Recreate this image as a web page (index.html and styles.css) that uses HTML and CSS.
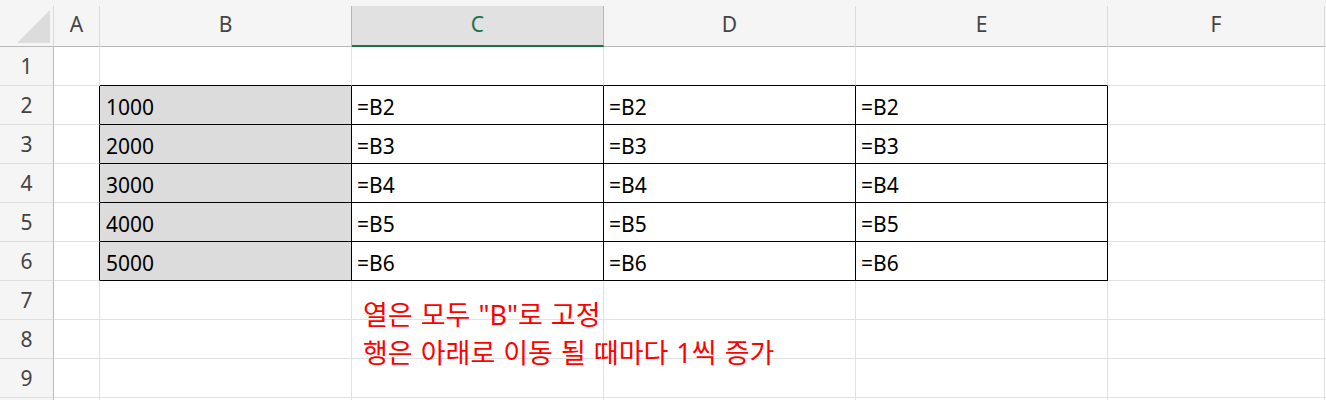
FILE: index.html
```html
<!DOCTYPE html>
<html lang="ko">
<head>
  <meta charset="UTF-8">
  <meta name="viewport" content="width=device-width, initial-scale=1.0">
  <title>Sheet1</title>
  <link rel="stylesheet" href="styles.css">
</head>
<body>

  <div class="sheet">
    <!-- Column headers -->
    <div class="corner"><div class="corner-mark"></div></div>
    <div class="col-head">A</div>
    <div class="col-head">B</div>
    <div class="col-head selected">C</div>
    <div class="col-head">D</div>
    <div class="col-head">E</div>
    <div class="col-head">F</div>
    <div class="col-head last"></div>

    <!-- Row 1 -->
    <div class="row-head">1</div>
    <div class="cell"></div>
    <div class="cell edge-b"></div>
    <div class="cell edge-b"></div>
    <div class="cell edge-b"></div>
    <div class="cell edge-b"></div>
    <div class="cell"></div>
    <div class="cell last"></div>

    <!-- Rows 2-6: bordered block -->
    <div class="row-head">2</div>
    <div class="cell edge-r"></div>
    <div class="cell box key">1000</div>
    <div class="cell box">=B2</div>
    <div class="cell box">=B2</div>
    <div class="cell box">=B2</div>
    <div class="cell"></div>
    <div class="cell last"></div>

    <div class="row-head">3</div>
    <div class="cell edge-r"></div>
    <div class="cell box key">2000</div>
    <div class="cell box">=B3</div>
    <div class="cell box">=B3</div>
    <div class="cell box">=B3</div>
    <div class="cell"></div>
    <div class="cell last"></div>

    <div class="row-head">4</div>
    <div class="cell edge-r"></div>
    <div class="cell box key">3000</div>
    <div class="cell box">=B4</div>
    <div class="cell box">=B4</div>
    <div class="cell box">=B4</div>
    <div class="cell"></div>
    <div class="cell last"></div>

    <div class="row-head">5</div>
    <div class="cell edge-r"></div>
    <div class="cell box key">4000</div>
    <div class="cell box">=B5</div>
    <div class="cell box">=B5</div>
    <div class="cell box">=B5</div>
    <div class="cell"></div>
    <div class="cell last"></div>

    <div class="row-head">6</div>
    <div class="cell edge-r"></div>
    <div class="cell box key">5000</div>
    <div class="cell box">=B6</div>
    <div class="cell box">=B6</div>
    <div class="cell box">=B6</div>
    <div class="cell"></div>
    <div class="cell last"></div>

    <!-- Rows 7-9 -->
    <div class="row-head">7</div>
    <div class="cell"></div>
    <div class="cell"></div>
    <div class="cell"></div>
    <div class="cell"></div>
    <div class="cell"></div>
    <div class="cell"></div>
    <div class="cell last"></div>

    <div class="row-head">8</div>
    <div class="cell"></div>
    <div class="cell"></div>
    <div class="cell"></div>
    <div class="cell"></div>
    <div class="cell"></div>
    <div class="cell"></div>
    <div class="cell last"></div>

    <div class="row-head">9</div>
    <div class="cell"></div>
    <div class="cell"></div>
    <div class="cell"></div>
    <div class="cell"></div>
    <div class="cell"></div>
    <div class="cell"></div>
    <div class="cell last"></div>

    <!-- Row 10, only its top edge shows -->
    <div class="row-head"></div>
    <div class="cell"></div>
    <div class="cell"></div>
    <div class="cell"></div>
    <div class="cell"></div>
    <div class="cell"></div>
    <div class="cell"></div>
    <div class="cell last"></div>

    <!-- Text box over the grid -->
    <div class="note">
      <div class="note-line">열은 모두 "B"로 고정</div>
      <div class="note-line">행은 아래로 이동 될 때마다 1씩 증가</div>
    </div>
  </div>

</body>
</html>
```

FILE: styles.css
```css
/* General styles */
* {
  box-sizing: border-box;
}

body {
  margin: 0;
  padding: 0;
  height: 400px;
  overflow: hidden;
  background-color: #ffffff;
  font-family: "Noto Sans", "Noto Sans CJK KR", sans-serif;
}

/* Grid of the worksheet */
.sheet {
  position: relative;
  display: grid;
  grid-template-columns: 54px 46px repeat(4, 252px) 217px 1fr;
  grid-template-rows: 47px repeat(10, 39px);
  background-color: #f5f5f5;
}

/* Top-left select-all corner */
.corner {
  margin-top: 6px;
  display: flex;
  align-items: flex-end;
  justify-content: flex-end;
  padding: 0 3px 3px 0;
  border-right: 1px solid #dadada;
  border-bottom: 1px solid #b9b9b9;
}

.corner-mark {
  width: 33px;
  height: 33px;
  background-color: #dcdcdc;
  clip-path: polygon(100% 0, 100% 100%, 0 100%);
}

/* Column headers */
.col-head {
  margin-top: 6px;
  display: flex;
  align-items: center;
  justify-content: center;
  padding-bottom: 4px;
  font-size: 21px;
  color: #444444;
  border-right: 1px solid #dadada;
  border-bottom: 1px solid #b9b9b9;
}

.col-head.selected {
  background-color: #e1e1e1;
  color: #1e7145;
  border-right-color: #b5b5b5;
  border-bottom: 2px solid #1e7145;
  box-shadow: -1px 0 0 #b5b5b5;
}

.col-head.last {
  border-right: none;
}

/* Row headers */
.row-head {
  display: flex;
  align-items: center;
  justify-content: center;
  font-size: 21px;
  color: #444444;
  background-color: #f5f5f5;
  border-right: 1px solid #b9b9b9;
  border-bottom: 1px solid #dedede;
}

/* Cells */
.cell {
  display: flex;
  align-items: center;
  padding: 3px 0 0 6px;
  font-size: 21px;
  color: #000000;
  background-color: #ffffff;
  border-right: 1px solid #e1e1e1;
  border-bottom: 1px solid #e1e1e1;
  white-space: nowrap;
}

.cell.last {
  border-right: none;
}

.cell.box {
  padding-left: 5px;
  border-right-color: #000000;
  border-bottom-color: #000000;
}

.cell.key {
  padding-left: 6px;
  background-color: #dcdcdc;
}

.cell.edge-r {
  border-right-color: #000000;
}

.cell.edge-b {
  border-bottom-color: #000000;
}

/* Red text box lying over the grid */
.note {
  position: absolute;
  left: 363px;
  top: 296px;
  font-size: 27px;
  color: #ff0000;
  white-space: nowrap;
}

.note-line {
  height: 38px;
  line-height: 38px;
  word-spacing: 1px;
}
```
